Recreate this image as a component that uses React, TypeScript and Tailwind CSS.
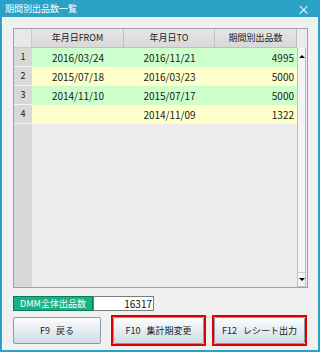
import React from 'react';

const rows = [
  { no: 1, from: '2016/03/24', to: '2016/11/21', count: '4995', bg: 'bg-[#ccffcc]' },
  { no: 2, from: '2015/07/18', to: '2016/03/23', count: '5000', bg: 'bg-[#ffffcc]' },
  { no: 3, from: '2014/11/10', to: '2015/07/17', count: '5000', bg: 'bg-[#ccffcc]' },
  { no: 4, from: '', to: '2014/11/09', count: '1322', bg: 'bg-[#ffffcc]' },
];

function FButton({ label, active, className }: { label: string; active?: boolean; className: string }) {
  return (
    <div className={`${className} h-[31px] border-2 ${active ? 'border-[#e00000]' : 'border-transparent'}`}>
      <button className="w-full h-full flex items-center justify-center border border-[#8e9aa8] rounded-[2px] bg-gradient-to-b from-[#fbfcfd] to-[#cfdde9] text-[9px] text-[#1a1a1a] whitespace-pre">
        {label}
      </button>
    </div>
  );
}

export default function App() {
  return (
    <div
      className="w-[320px] h-[352px] bg-[#2aa2c6] flex flex-col px-[2px] pb-[2px]"
      style={{ fontFamily: '"Noto Sans CJK JP", "Liberation Sans", sans-serif' }}
    >
      {/* Title bar */}
      <div className="h-[17px] flex items-center justify-between pl-[3px] pr-[8px] text-white">
        <span className="text-[9px] leading-none">期間別出品数一覧</span>
        <span className="text-[13px] leading-none">×</span>
      </div>

      {/* Body */}
      <div className="flex-1 bg-[#f0f0f0] border-l border-white flex flex-col pt-[11px] pl-[10px] pr-[10px]">
        {/* Grid */}
        <div className="h-[260px] border border-[#a0a0a0] flex bg-[#ececec]">
          <div className="w-[283px] flex flex-col">
            {/* Header */}
            <div className="h-[19px] flex text-[9px] text-[#222]">
              <div className="w-[18px] bg-[#e8e8e8] border-r border-b border-[#c8c8c8]" />
              <div className="w-[92px] bg-gradient-to-b from-[#e6e6e6] to-[#d8d8d8] border-r border-b border-[#c0c0c0] flex items-center justify-center">年月日FROM</div>
              <div className="w-[91px] bg-gradient-to-b from-[#e6e6e6] to-[#d8d8d8] border-r border-b border-[#c0c0c0] flex items-center justify-center">年月日TO</div>
              <div className="w-[82px] bg-gradient-to-b from-[#e6e6e6] to-[#d8d8d8] border-r border-b border-[#c0c0c0] flex items-center justify-center">期間別出品数</div>
            </div>
            {rows.map((r) => (
              <div key={r.no} className="h-[19px] flex text-[10px] text-[#1a1a1a]">
                <div className="w-[18px] bg-[#d8d8d8] border-b border-[#f4f4f4] flex items-center justify-center text-[9px]">{r.no}</div>
                <div className={`w-[92px] ${r.bg} flex items-center justify-center`}>{r.from}</div>
                <div className={`w-[91px] ${r.bg} flex items-center justify-center`}>{r.to}</div>
                <div className={`w-[82px] ${r.bg} flex items-center justify-end pr-[3px]`}>{r.count}</div>
              </div>
            ))}
            <div className="flex-1 flex">
              <div className="w-[18px] bg-[#d8d8d8]" />
              <div className="flex-1" />
            </div>
          </div>

          {/* Scrollbar */}
          <div className="w-[9px] flex flex-col">
            <div className="h-[19px]" />
            <div className="flex-1 bg-[#f4f4f4] border-l border-r border-b border-[#b4c2d0] flex flex-col justify-between">
              <div className="h-[16px] flex items-center justify-center">
                <div className="w-0 h-0 border-l-[3px] border-r-[3px] border-b-[3px] border-l-transparent border-r-transparent border-b-black" />
              </div>
              <div className="h-[14px] flex items-center justify-center border-t border-[#c8d0d8]">
                <div className="w-0 h-0 border-l-[3px] border-r-[3px] border-t-[3px] border-l-transparent border-r-transparent border-t-black" />
              </div>
            </div>
          </div>
        </div>

        {/* Total */}
        <div className="mt-[8px] flex h-[15px] text-[9px]">
          <div className="w-[80px] bg-[#13b385] border border-[#0d7a5a] text-white flex items-center justify-center">DMM全体出品数</div>
          <div className="w-[61px] bg-white border border-[#7a7a7a] flex items-center justify-end pr-[1px] text-[10px] text-[#111]">16317</div>
        </div>

        {/* Buttons */}
        <div className="mt-[4px] flex -ml-[2px]">
          <FButton className="w-[92px]" label="F9   戻る" />
          <FButton className="w-[95px] ml-[8px]" label="F10   集計期変更" active />
          <FButton className="w-[95px] ml-[6px]" label="F12   レシート出力" active />
        </div>
      </div>
    </div>
  );
}
